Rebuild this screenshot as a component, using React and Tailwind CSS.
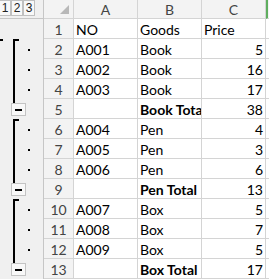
import React from "react";

const rows = [
  { n: 1, a: "NO", b: "Goods", c: "Price", cLeft: true, o: "none" },
  { n: 2, a: "A001", b: "Book", c: "5", o: "start", top: true },
  { n: 3, a: "A002", b: "Book", c: "16", o: "mid" },
  { n: 4, a: "A003", b: "Book", c: "17", o: "mid" },
  { n: 5, a: "", b: "Book Total", c: "38", bold: true, o: "end" },
  { n: 6, a: "A004", b: "Pen", c: "4", o: "start" },
  { n: 7, a: "A005", b: "Pen", c: "3", o: "mid" },
  { n: 8, a: "A006", b: "Pen", c: "6", o: "mid" },
  { n: 9, a: "", b: "Pen Total", c: "13", bold: true, o: "end" },
  { n: 10, a: "A007", b: "Box", c: "5", o: "start" },
  { n: 11, a: "A008", b: "Box", c: "7", o: "mid" },
  { n: 12, a: "A009", b: "Box", c: "5", o: "mid" },
  { n: 13, a: "", b: "Box Total", c: "17", bold: true, o: "end" },
];

function Outline({ r }) {
  return (
    <div className="flex w-[44px] h-full shrink-0 border-r border-[#c6c6c6] bg-[#f0f0f0]">
      <div className="w-[11px] h-full">
        {r.top && <div className="w-[3px] h-[2px] bg-black" />}
      </div>
      <div className="w-[16px] h-full flex flex-col">
        {r.o === "start" && (
          <div className="ml-[2px] w-[6px] flex-1 border-l-2 border-t-2 border-black" />
        )}
        {r.o === "mid" && <div className="ml-[2px] w-[2px] flex-1 bg-black" />}
        {r.o === "end" && (
          <>
            <div className="ml-[2px] w-[2px] h-[4px] bg-black" />
            <div className="w-[15px] h-[13px] border border-[#c4c4c4] bg-[#f8f8f8] flex items-center justify-center">
              <div className="w-[7px] h-[2px] bg-black" />
            </div>
          </>
        )}
      </div>
      <div className="w-[5px] h-full">
        {(r.o === "start" || r.o === "mid") && (
          <div className="mt-[10px] ml-[1px] w-[2px] h-[2px] bg-black" />
        )}
      </div>
    </div>
  );
}

export default function App() {
  return (
    <div className="w-[269px] h-[279px] overflow-hidden bg-white font-['Lato',sans-serif] text-[14px] text-black">
      {/* header row */}
      <div className="flex h-[19px]">
        <div className="w-[44px] h-full shrink-0 border-r border-b border-[#c6c6c6] bg-[#f0f0f0] flex items-start font-['Liberation_Sans',sans-serif] text-[12px] text-[#222]">
          <div className="ml-[-1px] flex">
            {["1", "2", "3"].map((t) => (
              <div
                key={t}
                className="w-[12px] h-[16px] border border-[#c0c0c0] bg-[#f8f8f8] flex items-center justify-center leading-none"
              >
                {t}
              </div>
            ))}
          </div>
        </div>
        <div className="w-[30px] h-full shrink-0 border-r border-b border-[#d4d4d4] bg-[#f3f3f3] flex">
          <svg width="29" height="18" viewBox="0 0 29 18">
            <polygon points="25,5 25,14 16,14" fill="#b8b8b8" />
          </svg>
        </div>
        {["A", "B", "C"].map((h) => (
          <div
            key={h}
            className="w-[64px] h-full shrink-0 border-r border-b border-[#d4d4d4] bg-[#f3f3f3] flex items-center justify-center text-[#444] leading-[19px] pt-[1px]"
          >
            {h}
          </div>
        ))}
        <div className="flex-1 h-full border-l-2 border-l-[#5fae5f] border-b border-b-[#d4d4d4] bg-[#f3f3f3]" />
      </div>
      {rows.map((r) => (
        <div key={r.n} className="flex h-[20px]">
          <Outline r={r} />
          <div className="w-[30px] h-full shrink-0 border-r border-b border-[#d4d4d4] bg-[#f3f3f3] flex items-center justify-center text-[#444] leading-[19px] pt-[1px]">
            {r.n}
          </div>
          <div className="w-[64px] h-full shrink-0 border-r border-b border-[#d4d4d4] flex items-center px-[2px] overflow-hidden whitespace-nowrap leading-[19px] pt-[1px]">
            {r.a}
          </div>
          <div
            className={`w-[64px] h-full shrink-0 border-r border-b border-[#d4d4d4] flex items-center px-[2px] overflow-hidden whitespace-nowrap leading-[19px] pt-[1px] ${
              r.bold ? "font-bold" : ""
            }`}
          >
            {r.b}
          </div>
          <div
            className={`w-[64px] h-full shrink-0 border-r border-b border-[#d4d4d4] flex items-center px-[2px] overflow-hidden whitespace-nowrap leading-[19px] pt-[1px] ${
              r.cLeft ? "justify-start" : "justify-end"
            }`}
          >
            {r.c}
          </div>
          <div className="flex-1 h-full border-b border-[#d4d4d4]" />
        </div>
      ))}
    </div>
  );
}
